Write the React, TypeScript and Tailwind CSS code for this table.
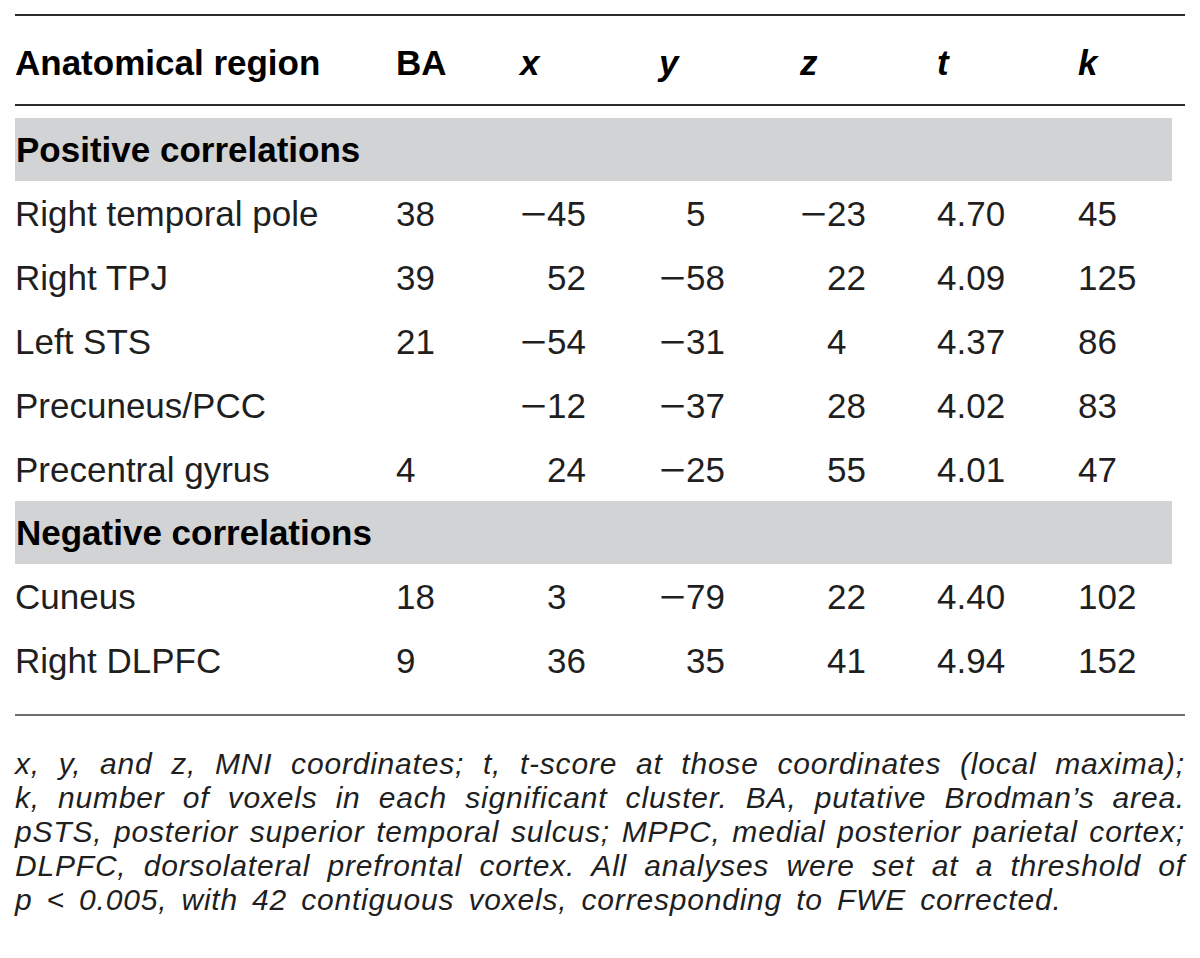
type Row = {
  region: string;
  ba: string;
  x: string;
  y: string;
  z: string;
  t: string;
  k: string;
};

const positive: Row[] = [
  { region: 'Right temporal pole', ba: '38', x: '−45', y: '5', z: '−23', t: '4.70', k: '45' },
  { region: 'Right TPJ', ba: '39', x: '52', y: '−58', z: '22', t: '4.09', k: '125' },
  { region: 'Left STS', ba: '21', x: '−54', y: '−31', z: '4', t: '4.37', k: '86' },
  { region: 'Precuneus/PCC', ba: '', x: '−12', y: '−37', z: '28', t: '4.02', k: '83' },
  { region: 'Precentral gyrus', ba: '4', x: '24', y: '−25', z: '55', t: '4.01', k: '47' },
];

const negative: Row[] = [
  { region: 'Cuneus', ba: '18', x: '3', y: '−79', z: '22', t: '4.40', k: '102' },
  { region: 'Right DLPFC', ba: '9', x: '36', y: '35', z: '41', t: '4.94', k: '152' },
];

const cols = 'grid grid-cols-[381px_124px_139px_141px_137px_141px_1fr]';

// positive values sit one minus-width to the right so the digits line up
const Coord = ({ v }: { v: string }) => {
  const neg = v.startsWith('−');
  return (
    <span className="flex">
      <span className="inline-block w-[27px]">
        {neg && <span className="inline-block origin-left scale-x-[1.3]">−</span>}
      </span>
      {neg ? v.slice(1) : v}
    </span>
  );
};

const DataRow = ({ row }: { row: Row }) => (
  <div className={`${cols} h-[64px] items-center text-[35px] leading-none text-[#1f1f1f]`}>
    <span>{row.region}</span>
    <span>{row.ba}</span>
    <Coord v={row.x} />
    <Coord v={row.y} />
    <Coord v={row.z} />
    <span>{row.t}</span>
    <span>{row.k}</span>
  </div>
);

const Band = ({ label }: { label: string }) => (
  <div className="mr-[13px] flex h-[63px] items-center bg-[#d1d3d4] text-[35px] font-bold leading-none text-black">
    <span className="pl-[1px]">{label}</span>
  </div>
);

const notes = [
  'x, y, and z, MNI coordinates; t, t-score at those coordinates (local maxima);',
  'k, number of voxels in each significant cluster. BA, putative Brodman’s area.',
  'pSTS, posterior superior temporal sulcus; MPPC, medial posterior parietal cortex;',
  'DLPFC, dorsolateral prefrontal cortex. All analyses were set at a threshold of',
];

export default function App() {
  return (
    <div className="h-[958px] w-[1200px] bg-white px-[15px] pt-[14px] font-['Liberation_Sans',Arial,sans-serif]">
      <div className="h-[2px] bg-[#2b2b2b]" />

      <div className={`${cols} h-[88px] items-center pt-[4px] text-[35px] font-bold leading-none text-black`}>
        <span>Anatomical region</span>
        <span>BA</span>
        <span className="italic">x</span>
        <span className="italic">y</span>
        <span className="italic">z</span>
        <span className="italic">t</span>
        <span className="italic">k</span>
      </div>

      <div className="h-[2px] bg-[#2b2b2b]" />

      <div className="mt-[12px]">
        <Band label="Positive correlations" />
        {positive.map((r) => (
          <DataRow key={r.region} row={r} />
        ))}
        <Band label="Negative correlations" />
        {negative.map((r) => (
          <DataRow key={r.region} row={r} />
        ))}
      </div>

      <div className="mt-[22px] h-[2px] bg-[#6d6e71]" />

      <div className="mt-[31px] text-[30px] italic leading-[34px] tracking-[0.8px] text-[#1f1f1f]">
        {notes.map((line) => (
          <div key={line} className="text-justify [text-align-last:justify]">
            {line}
          </div>
        ))}
        <div className="[word-spacing:5px]">
          p &lt; 0.005, with 42 contiguous voxels, corresponding to FWE corrected.
        </div>
      </div>
    </div>
  );
}
